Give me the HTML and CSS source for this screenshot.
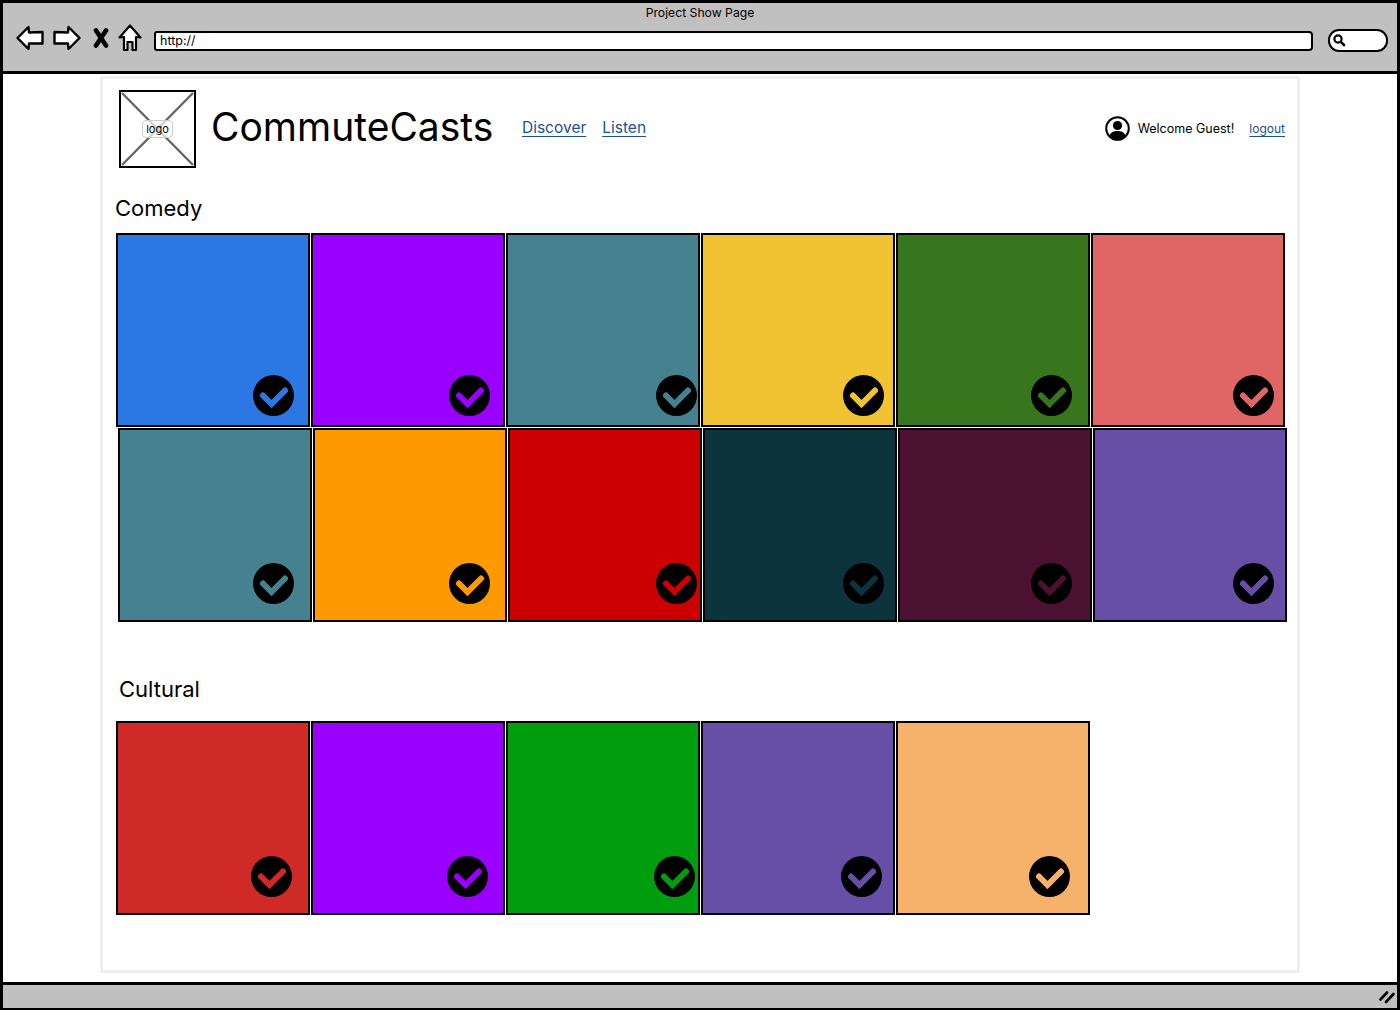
FILE: index.html
```html
<!DOCTYPE html>
<html lang="en">
<head>
<meta charset="utf-8">
<title>Project Show Page</title>
<link rel="stylesheet" href="styles.css">
</head>
<body>
<svg class="defs" width="0" height="0" aria-hidden="true">
  <symbol id="check" viewBox="0 0 41 41">
    <circle cx="20.5" cy="20.5" r="20.5" fill="#000"/>
    <path class="tick" d="M10 20.5 L18.5 29 L32 15.5" fill="none" stroke-width="6" stroke-linecap="round" stroke-linejoin="miter"/>
  </symbol>
</svg>
<div class="window">
  <header class="chrome">
    <div class="chrome-title">Project Show Page</div>
    <div class="toolbar">
      <svg class="ico ico-back" width="28" height="26" viewBox="0 0 28 26"><path d="M1.5 13 L12.5 2 L13 7.5 L26.5 7 L26.5 18.5 L13 18.5 L12.5 24 Z" fill="#fff" stroke="#000" stroke-width="2.4" stroke-linejoin="round"/></svg>
      <svg class="ico ico-fwd" width="28" height="26" viewBox="0 0 28 26"><path d="M26.5 13 L15.5 2 L15 7.5 L1.5 7 L1.5 18.5 L15 18.5 L15.5 24 Z" fill="#fff" stroke="#000" stroke-width="2.4" stroke-linejoin="round"/></svg>
      <svg class="ico ico-x" width="16" height="20" viewBox="0 0 16 20"><path d="M3 2.5 L13 17.5 M13 2.5 L3 17.5" fill="none" stroke="#000" stroke-width="4.6" stroke-linecap="round"/></svg>
      <svg class="ico ico-home" width="24" height="28" viewBox="0 0 24 28"><path d="M12 1.5 L22.5 13.5 L18 13 L18 26 L14.5 26 L14.5 18 L9.5 18 L9.5 26 L6 26 L6 13 L1.5 13.5 Z" fill="#fff" stroke="#000" stroke-width="2.2" stroke-linejoin="round"/></svg>
      <div class="url">http://</div>
      <div class="search">
        <svg width="14" height="14" viewBox="0 0 14 14"><circle cx="6" cy="6" r="3.6" fill="none" stroke="#000" stroke-width="2.2"/><path d="M8.8 8.8 L12 12" stroke="#000" stroke-width="2.6" stroke-linecap="round"/></svg>
      </div>
    </div>
  </header>
  <main class="viewport">
    <div class="page">
      <div class="site-head">
        <div class="logo">
          <svg class="logo-x" width="77" height="78" viewBox="0 0 77 78"><path d="M3 3 L74 75 M74 3 L3 75" stroke="#666" stroke-width="2.4"/></svg>
          <span class="logo-label">logo</span>
        </div>
        <h1 class="brand">CommuteCasts</h1>
        <nav class="nav"><a href="#">Discover</a><a href="#">Listen</a></nav>
        <div class="user">
          <svg width="25" height="25" viewBox="0 0 25 25"><circle cx="12.5" cy="12.5" r="11.3" fill="#fff" stroke="#000" stroke-width="2"/><circle cx="12.5" cy="9.5" r="4.6" fill="#000"/><path d="M4.5 20 C6 15.5 9 15 12.5 15 C16 15 19 15.5 20.5 20 C18 23.5 15 24 12.5 24 C10 24 7 23.5 4.5 20 Z" fill="#000"/></svg>
          <span class="welcome">Welcome Guest!</span>
          <a class="logout" href="#">logout</a>
        </div>
      </div>

      <h2 class="cat cat-comedy">Comedy</h2>
      <div class="row row-a">
        <div class="tile c-blue"><svg class="check"><use href="#check"/></svg></div>
        <div class="tile c-purple"><svg class="check"><use href="#check"/></svg></div>
        <div class="tile c-teal"><svg class="check"><use href="#check"/></svg></div>
        <div class="tile c-yellow"><svg class="check"><use href="#check"/></svg></div>
        <div class="tile c-green"><svg class="check"><use href="#check"/></svg></div>
        <div class="tile c-salmon"><svg class="check"><use href="#check"/></svg></div>
      </div>
      <div class="row row-b">
        <div class="tile c-teal"><svg class="check"><use href="#check"/></svg></div>
        <div class="tile c-orange"><svg class="check"><use href="#check"/></svg></div>
        <div class="tile c-red"><svg class="check"><use href="#check"/></svg></div>
        <div class="tile c-navy"><svg class="check"><use href="#check"/></svg></div>
        <div class="tile c-plum"><svg class="check"><use href="#check"/></svg></div>
        <div class="tile c-violet"><svg class="check"><use href="#check"/></svg></div>
      </div>

      <h2 class="cat cat-cultural">Cultural</h2>
      <div class="row row-c">
        <div class="tile c-crimson"><svg class="check"><use href="#check"/></svg></div>
        <div class="tile c-purple"><svg class="check"><use href="#check"/></svg></div>
        <div class="tile c-emerald"><svg class="check"><use href="#check"/></svg></div>
        <div class="tile c-violet"><svg class="check"><use href="#check"/></svg></div>
        <div class="tile c-peach"><svg class="check"><use href="#check"/></svg></div>
      </div>
    </div>
  </main>
  <footer class="statusbar">
    <svg width="16" height="14" viewBox="0 0 16 14"><path d="M1.5 9.5 L8 2.5 M7 12 L14.5 4" stroke="#000" stroke-width="2.6" stroke-linecap="round"/></svg>
  </footer>
</div>
</body>
</html>
```
FILE: styles.css
```css
* { box-sizing: border-box; }
html, body { margin: 0; padding: 0; background: #fff; }
body { font-family: "Inter", "Liberation Sans", sans-serif; color: #000; width: 1400px; height: 1011px; overflow: hidden; }
.defs { position: absolute; }
a { color: #1a5296; text-underline-offset: 3px; }

.window { width: 1400px; height: 1010px; border: 3px solid #000; border-width: 3px 3px 2px 3px; display: flex; flex-direction: column; background: #fff; }

.chrome { height: 71px; background: #c0c0c0; border-bottom: 3px solid #000; flex: none; }
.chrome-title { font-size: 12.2px; line-height: 16px; text-align: center; padding-top: 2px; height: 18px; }
.toolbar { display: flex; align-items: center; height: 33px; padding-left: 13px; }
.ico { flex: none; display: block; }
.ico-fwd { margin-left: 9px; }
.ico-x { margin-left: 12px; }
.ico-home { margin-left: 9px; }
.url { flex: none; width: 1159px; height: 20px; margin: 6px 0 0 12px; background: #fff; border: 2.5px solid #000; border-radius: 3px 4px 4px 3px; font-size: 12.5px; line-height: 15px; padding-left: 4px; }
.search { flex: none; width: 60px; height: 23px; margin: 5px 0 0 15px; background: #fff; border: 2.5px solid #000; border-radius: 11px; padding: 2px 0 0 2px; }
.search svg { display: block; }

.viewport { flex: 1; min-height: 0; padding: 2px 0 0 97px; }
.page { width: 1200px; height: 897px; border: 3px solid #eee; border-radius: 3px; padding: 11px 12px 0 14px; }

.site-head { display: flex; align-items: center; height: 78px; padding-left: 2px; }
.logo { position: relative; flex: none; width: 77px; height: 78px; border: 2.5px solid #000; display: flex; align-items: center; justify-content: center; }
.logo-x { position: absolute; left: -2.5px; top: -2.5px; }
.logo-label { position: relative; font-size: 11px; line-height: 16px; padding: 0 3px; margin-top: -1px; background: rgba(255,255,255,.7); border: 1.5px solid #ccc; border-radius: 4px; }
.brand { margin: 0 0 4px 15px; font-size: 39px; font-weight: 400; line-height: 50px; white-space: nowrap; width: 311px; }
.nav { display: flex; gap: 16px; font-size: 15.5px; margin-bottom: 4px; }
.nav a { text-decoration: underline; }
.user { margin-left: auto; margin-bottom: 1px; display: flex; align-items: center; font-size: 12.5px; }
.welcome { margin-left: 8px; }
.logout { margin-left: 15px; font-size: 12px; }

.cat { margin: 0; font-size: 22px; font-weight: 400; line-height: 30px; }
.cat-comedy { margin-top: 25px; margin-left: -2px; }
.cat-cultural { margin-top: 52px; margin-left: 2px; }

.row { display: grid; grid-template-columns: repeat(6, 194px); column-gap: 1px; }
.row-a { margin: 10px 0 0 -1px; --r: 0px; }
.row-b { margin: 1px 0 0 1px; --r: 2px; }
.row-c { margin: 17px 0 0 -1px; --r: 2px; }

.tile { position: relative; height: 194px; border: 2px solid #000; }
.check { position: absolute; width: 41px; height: 41px; }
.row-a .check { bottom: 9px; }
.row-b .check { bottom: 16px; }
.row-c .check { bottom: 16px; }
.tile:nth-child(1) .check { right: calc(var(--r) + 14px); }
.tile:nth-child(2) .check { right: calc(var(--r) + 13px); }
.tile:nth-child(3) .check { right: calc(var(--r) + 1px); }
.tile:nth-child(4) .check { right: calc(var(--r) + 9px); }
.tile:nth-child(5) .check { right: calc(var(--r) + 16px); }
.tile:nth-child(6) .check { right: calc(var(--r) + 9px); }

.tile { --c: #000; background: var(--c); }
.tick { stroke: var(--c); }
.c-blue { --c: #2b78e4; }
.c-purple { --c: #9900ff; }
.c-teal { --c: #45818e; }
.c-yellow { --c: #f1c232; }
.c-green { --c: #38761d; }
.c-salmon { --c: #e06666; }
.c-orange { --c: #ff9900; }
.c-red { --c: #cc0000; }
.c-navy { --c: #0c343d; }
.c-plum { --c: #4c1130; }
.c-violet { --c: #674ea7; }
.c-crimson { --c: #cf2a27; }
.c-emerald { --c: #009e0f; }
.c-peach { --c: #f6b26b; }

.statusbar { flex: none; height: 26px; background: #c0c0c0; border-top: 3px solid #000; display: flex; align-items: center; justify-content: flex-end; padding-right: 2px; }
```
